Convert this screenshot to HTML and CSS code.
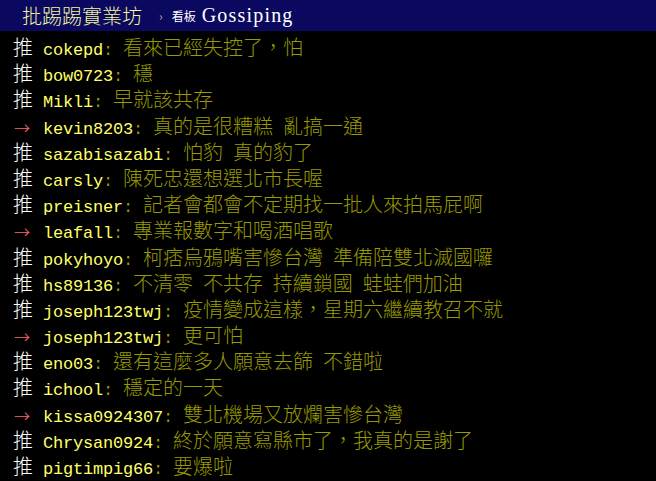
FILE: index.html
```html
<!DOCTYPE html>
<html lang="zh-Hant">
  <head>
    <meta charset="UTF-8" />
    <title>批踢踢實業坊 › 看板 Gossiping</title>
    <link rel="stylesheet" href="styles.css">
  </head>
  <body>
    <!-- top bar -->
    <div class="topbar">
      <span class="logo">批踢踢實業坊</span>
      <span class="sep">›</span>
      <span class="board-label">看板</span>
      <span class="board">Gossiping</span>
    </div>

    <!-- push list -->
    <div class="pushes">
      <div class="push"><span class="tag">推</span><span class="uid">cokepd</span><span class="colon">: </span><span class="text">看來已經失控了，怕</span></div>
      <div class="push"><span class="tag">推</span><span class="uid">bow0723</span><span class="colon">: </span><span class="text">穩</span></div>
      <div class="push"><span class="tag">推</span><span class="uid">Mikli</span><span class="colon">: </span><span class="text">早就該共存</span></div>
      <div class="push"><span class="tag arrow">→</span><span class="uid">kevin8203</span><span class="colon">: </span><span class="text">真的是很糟糕 亂搞一通</span></div>
      <div class="push"><span class="tag">推</span><span class="uid">sazabisazabi</span><span class="colon">: </span><span class="text">怕豹 真的豹了</span></div>
      <div class="push"><span class="tag">推</span><span class="uid">carsly</span><span class="colon">: </span><span class="text">陳死忠還想選北市長喔</span></div>
      <div class="push"><span class="tag">推</span><span class="uid">preisner</span><span class="colon">: </span><span class="text">記者會都會不定期找一批人來拍馬屁啊</span></div>
      <div class="push"><span class="tag arrow">→</span><span class="uid">leafall</span><span class="colon">: </span><span class="text">專業報數字和喝酒唱歌</span></div>
      <div class="push"><span class="tag">推</span><span class="uid">pokyhoyo</span><span class="colon">: </span><span class="text">柯痞烏鴉嘴害慘台灣 準備陪雙北滅國囉</span></div>
      <div class="push"><span class="tag">推</span><span class="uid">hs89136</span><span class="colon">: </span><span class="text">不清零 不共存 持續鎖國 蛙蛙們加油</span></div>
      <div class="push"><span class="tag">推</span><span class="uid">joseph123twj</span><span class="colon">: </span><span class="text">疫情變成這樣，星期六繼續教召不就</span></div>
      <div class="push"><span class="tag arrow">→</span><span class="uid">joseph123twj</span><span class="colon">: </span><span class="text">更可怕</span></div>
      <div class="push"><span class="tag">推</span><span class="uid">eno03</span><span class="colon">: </span><span class="text">還有這麼多人願意去篩 不錯啦</span></div>
      <div class="push"><span class="tag">推</span><span class="uid">ichool</span><span class="colon">: </span><span class="text">穩定的一天</span></div>
      <div class="push"><span class="tag arrow">→</span><span class="uid">kissa0924307</span><span class="colon">: </span><span class="text">雙北機場又放爛害慘台灣</span></div>
      <div class="push"><span class="tag">推</span><span class="uid">Chrysan0924</span><span class="colon">: </span><span class="text">終於願意寫縣市了，我真的是謝了</span></div>
      <div class="push"><span class="tag">推</span><span class="uid">pigtimpig66</span><span class="colon">: </span><span class="text">要爆啦</span></div>
    </div>
  </body>
</html>
```

FILE: styles.css
```css
* {
  margin: 0;
  padding: 0;
  box-sizing: border-box;
}

body {
  background: #000;
  color: #ccc;
  font-family: "Noto Sans CJK TC", sans-serif;
  overflow: hidden;
}

/* top bar */
.topbar {
  height: 31px;
  background: #0b0860;
  display: flex;
  align-items: center;
  padding-left: 22px;
  white-space: nowrap;
}

.logo {
  color: #f4f49c;
  font-size: 20px;
  line-height: 31px;
  font-weight: 300;
}

.sep {
  color: #aaa;
  font-size: 12px;
  margin-left: 17px;
  margin-right: 9px;
}

.board-label {
  color: #fff;
  font-size: 12px;
  margin-right: 6px;
}

.board {
  color: #fff;
  font-family: "Liberation Serif", serif;
  font-size: 20px;
  letter-spacing: 1.2px;
}

/* push rows */
.pushes {
  padding-top: 3px;
}

.push {
  padding-left: 13px;
  height: 26.2px;
  line-height: 26.2px;
  font-size: 20px;
  white-space: nowrap;
}

.tag {
  display: inline-block;
  width: 30px;
  color: #fff;
  font-weight: 300;
}

.tag.arrow {
  color: #f66;
  font-size: 16px;
  padding-left: 1px;
}

.uid {
  color: #ff6;
  font-family: "Liberation Mono", monospace;
  font-size: 17px;
  letter-spacing: -0.2px;
}

.colon {
  color: #990;
  font-family: "Liberation Mono", monospace;
  font-size: 17px;
  letter-spacing: -0.2px;
  white-space: pre;
}

.text {
  color: #990;
  font-weight: 300;
  word-spacing: 5.5px;
}
```
